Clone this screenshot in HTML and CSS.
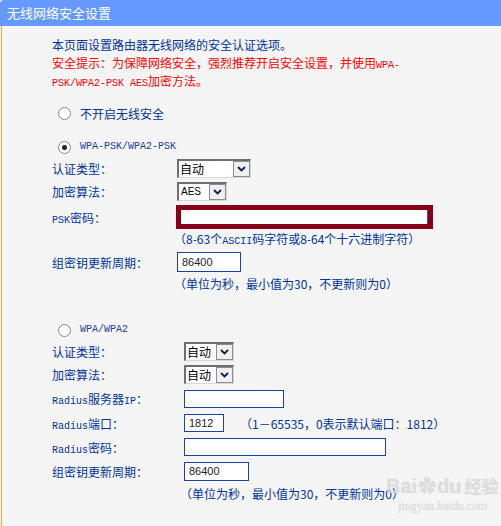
FILE: index.html
```html
<!DOCTYPE html>
<html lang="zh-CN">
<head>
  <meta charset="UTF-8" />
  <title>无线网络安全设置</title>
  <link rel="stylesheet" href="styles.css">
</head>
<body>

  <div class="panel">
    <div class="panel-title">无线网络安全设置</div>

    <div class="panel-body">
      <!-- Intro -->
      <p class="intro">本页面设置路由器无线网络的安全认证选项。</p>
      <p class="warn">安全提示：为保障网络安全，强烈推荐开启安全设置，并使用<span class="en">WPA-</span><br><span class="en">PSK/WPA2-PSK AES</span>加密方法。</p>

      <!-- Off -->
      <div class="radio-row first">
        <span class="radio"></span>
        <span>不开启无线安全</span>
      </div>

      <!-- WPA-PSK -->
      <div class="radio-row second">
        <span class="radio checked"></span>
        <span class="en">WPA-PSK/WPA2-PSK</span>
      </div>

      <div class="psk">
        <div class="row h23">
          <span class="label">认证类型：</span>
          <div class="sel w73">
            <span class="sel-val">自动</span>
            <span class="sel-btn"><svg viewBox="0 0 9 6"><path d="M1 1l3.5 3.5L8 1" /></svg></span>
          </div>
        </div>
        <div class="row h23">
          <span class="label">加密算法：</span>
          <div class="sel w50 short">
            <span class="sel-val en">AES</span>
            <span class="sel-btn"><svg viewBox="0 0 9 6"><path d="M1 1l3.5 3.5L8 1" /></svg></span>
          </div>
        </div>
        <div class="row h28">
          <span class="label"><span class="en">PSK</span>密码：</span>
          <div class="psk-box"><span class="psk-inner"></span></div>
        </div>
        <p class="hint h16 ind-psk">（8-63个<span class="en">ASCII</span>码字符或8-64个十六进制字符）</p>
        <div class="row h30">
          <span class="label">组密钥更新周期：</span>
          <span class="field w64">86400</span>
        </div>
        <p class="hint h14 ind-psk">（单位为秒，最小值为30，不更新则为0）</p>
      </div>

      <!-- WPA -->
      <div class="radio-row third">
        <span class="radio"></span>
        <span class="en">WPA/WPA2</span>
      </div>

      <div class="wpa">
        <div class="row h22">
          <span class="label">认证类型：</span>
          <div class="sel w50">
            <span class="sel-val">自动</span>
            <span class="sel-btn"><svg viewBox="0 0 9 6"><path d="M1 1l3.5 3.5L8 1" /></svg></span>
          </div>
        </div>
        <div class="row h24">
          <span class="label">加密算法：</span>
          <div class="sel w50">
            <span class="sel-val">自动</span>
            <span class="sel-btn"><svg viewBox="0 0 9 6"><path d="M1 1l3.5 3.5L8 1" /></svg></span>
          </div>
        </div>
        <div class="row h25">
          <span class="label"><span class="en">Radius</span>服务器<span class="en">IP</span>：</span>
          <span class="field w100 t18"></span>
        </div>
        <div class="row h24">
          <span class="label"><span class="en">Radius</span>端口：</span>
          <span class="field w40 t18">1812</span>
          <span class="port-hint">（1－65535，0表示默认端口：1812）</span>
        </div>
        <div class="row h24">
          <span class="label"><span class="en">Radius</span>密码：</span>
          <span class="field w202 t18"></span>
        </div>
        <div class="row h24">
          <span class="label">组密钥更新周期：</span>
          <span class="field w65 t19">86400</span>
        </div>
        <p class="hint h22 ind-wpa">（单位为秒，最小值为30，不更新则为0）</p>
      </div>
    </div>

    <!-- watermark -->
    <div class="watermark">
      <div class="wm-logo">Bai<span class="wm-paw">&#10047;</span>du<span class="wm-cn">经验</span></div>
      <div class="wm-url">jingyan.baidu.com</div>
    </div>
  </div>

</body>
</html>
```

FILE: styles.css
```css
/* Base */
* {
  font-family: "Noto Sans CJK SC", "Noto Sans", sans-serif;
}

body {
  margin: 0;
  background: #f5f5f5;
  color: #003399;
  font-size: 12px;
}

p {
  margin: 0;
}

.en {
  font-family: "Liberation Mono", monospace;
  font-size: 10px;
  line-height: 1;
}

/* Panel */
.panel {
  position: relative;
  width: 501px;
  height: 526px;
  overflow: hidden;
}

.panel-title {
  height: 26px;
  line-height: 25px;
  padding-left: 7px;
  background: #6699ff;
  color: #fff;
  font-size: 13px;
  border-top-left-radius: 4px;
}

.panel-body {
  height: 500px;
  margin-left: 1px;
  border-left: 1px solid #f4a54c;
  padding: 10px 0 0 50px;
  box-sizing: border-box;
}

.intro,
.warn {
  height: 18px;
  line-height: 18px;
}

.warn {
  height: 36px;
  color: #ff0000;
}

/* Radios */
.radio-row {
  display: flex;
  align-items: center;
  gap: 9px;
  height: 20px;
  padding-left: 6px;
  color: #00338f;
}

.radio-row.first { margin-top: 13px; }
.radio-row.second { margin-top: 14px; color: #1a3c9c; }
.radio-row.third { margin-top: 29px; color: #1a3c9c; }

.radio {
  width: 11px;
  height: 11px;
  border: 1px solid #8a8a8a;
  border-radius: 50%;
  background: #fff;
  position: relative;
  flex: none;
}

.radio.checked::after {
  content: "";
  position: absolute;
  left: 3px;
  top: 3px;
  width: 5px;
  height: 5px;
  border-radius: 50%;
  background: #222;
}

/* Form rows */
.row {
  display: flex;
  align-items: center;
}

.h22 { height: 22px; }
.h23 { height: 23px; }
.h24 { height: 24px; }
.h25 { height: 25px; }
.h28 { height: 28px; }
.h30 { height: 30px; }

.psk .label {
  width: 125px;
  flex: none;
}

.wpa .label {
  width: 132px;
  flex: none;
}

.hint {
  white-space: nowrap;
}

.hint.h14 { height: 14px; line-height: 14px; }
.hint.h16 { height: 16px; line-height: 16px; }
.hint.h22 { height: 22px; line-height: 22px; }

.ind-psk { padding-left: 122px; }
.ind-wpa { padding-left: 128px; }

/* Fake select */
.sel {
  display: inline-flex;
  height: 19px;
  box-sizing: border-box;
  border-top: 2px solid #6e6e6e;
  border-left: 2px solid #6e6e6e;
  border-right: 1px solid #d6d6d6;
  border-bottom: 1px solid #d6d6d6;
  background: #fff;
  color: #000;
}

.sel.w73 { width: 74px; }
.sel.w50 { width: 50px; }
.sel.short { height: 19px; }

.sel-val {
  flex: 1;
  line-height: 16px;
  padding-left: 1px;
  font-size: 12px;
  white-space: nowrap;
  overflow: hidden;
}

.sel-val.en {
  font-family: "Liberation Sans", sans-serif;
  font-size: 10px;
  line-height: 16px;
  padding-left: 2px;
}

.sel-btn {
  width: 17px;
  flex: none;
  box-sizing: border-box;
  border: 1px solid #8c8c8c;
  background: #f0f0f0;
  display: flex;
  align-items: center;
  justify-content: center;
}

.sel-btn svg {
  width: 9px;
  height: 6px;
  fill: none;
  stroke: #0a1f5a;
  stroke-width: 1.8;
}

/* Inputs */
.field {
  display: inline-block;
  height: 20px;
  line-height: 18px;
  box-sizing: border-box;
  border: 1px solid #1e40a6;
  background: #fff;
  padding-left: 4px;
  color: #222;
  font-family: "Liberation Sans", sans-serif;
  font-size: 11px;
}

.field.t18 { height: 18px; line-height: 16px; }
.field.t19 { height: 19px; line-height: 17px; }

.w40 { width: 40px; }
.w64 { width: 64px; }
.w65 { width: 65px; }
.w100 { width: 100px; }
.w202 { width: 202px; }

.psk-box {
  width: 257px;
  height: 24px;
  box-sizing: border-box;
  border: 5px solid #880018;
  margin-left: -1px;
  display: flex;
}

.psk-inner {
  flex: 1;
  background: #fff;
  border-right: 1px solid #2b4fd0;
}

.port-hint {
  margin-left: 16px;
  white-space: nowrap;
}

/* Watermark over content */
.watermark {
  position: absolute;
  left: 386px;
  top: 472px;
  color: rgba(222, 222, 222, 0.7);
  text-shadow: 0 0 1px rgba(190, 190, 190, 0.5);
  pointer-events: none;
  white-space: nowrap;
}

.wm-logo {
  font-family: "Liberation Sans", sans-serif;
  font-size: 20px;
  font-weight: 700;
  line-height: 26px;
}

.wm-paw {
  font-size: 18px;
  margin: 0 1px;
}

.wm-cn {
  font-size: 17px;
  margin-left: 3px;
}

.wm-url {
  font-family: "Liberation Serif", serif;
  font-size: 12px;
  line-height: 14px;
  padding-left: 12px;
}
```
